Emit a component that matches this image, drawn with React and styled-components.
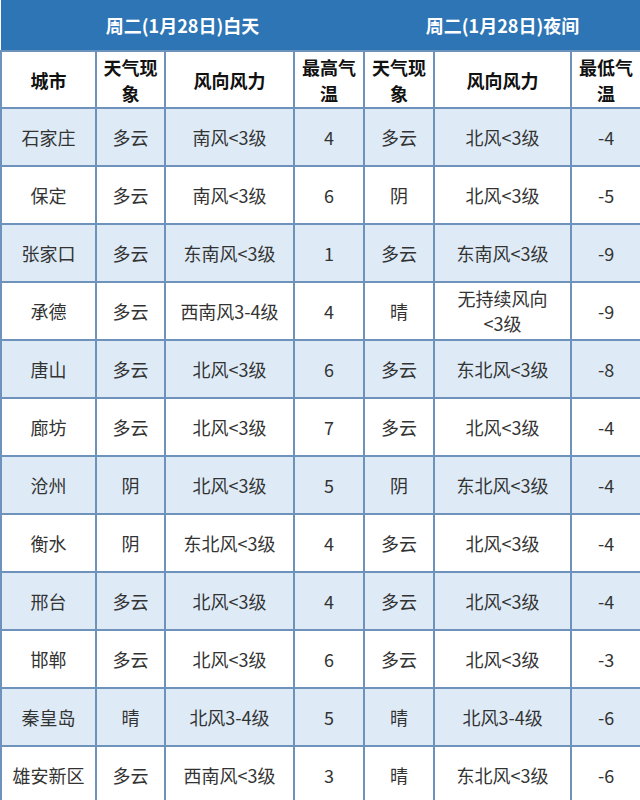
import React from "react";
import styled, { createGlobalStyle } from "styled-components";

const GlobalStyle = createGlobalStyle`
  body {
    margin: 0;
    background: #ffffff;
    font-family: "Noto Sans CJK SC", "Noto Sans", sans-serif;
  }
`;

const Table = styled.table`
  width: 640px;
  border-collapse: collapse;
  table-layout: fixed;
`;

const TitleCell = styled.th`
  height: 50px;
  padding: 0;
  background: #2e75b6;
  color: #ffffff;
  font-size: 18px;
  font-weight: 700;
  text-align: center;
  vertical-align: middle;
  border: none;
`;

const HeadCell = styled.th`
  height: 55px;
  padding: 0 1px;
  background: #ffffff;
  color: #111111;
  font-size: 18px;
  font-weight: 700;
  line-height: 26px;
  text-align: center;
  border: 2px solid #6d93bd;
`;

const Row = styled.tr`
  background: ${(p) => (p.$shaded ? "#deebf7" : "#ffffff")};
`;

const Cell = styled.td`
  height: 56px;
  padding: 0 1px;
  color: #333333;
  font-size: 18px;
  line-height: 25px;
  text-align: center;
  white-space: pre-line;
  border: 2px solid #6d93bd;
`;

const widths = [95, 69, 129, 70, 70, 137, 70];
const heads = ["城市", "天气现象", "风向风力", "最高气温", "天气现象", "风向风力", "最低气温"];

const rows = [
  ["石家庄", "多云", "南风<3级", "4", "多云", "北风<3级", "-4"],
  ["保定", "多云", "南风<3级", "6", "阴", "北风<3级", "-5"],
  ["张家口", "多云", "东南风<3级", "1", "多云", "东南风<3级", "-9"],
  ["承德", "多云", "西南风3-4级", "4", "晴", "无持续风向\n<3级", "-9"],
  ["唐山", "多云", "北风<3级", "6", "多云", "东北风<3级", "-8"],
  ["廊坊", "多云", "北风<3级", "7", "多云", "北风<3级", "-4"],
  ["沧州", "阴", "北风<3级", "5", "阴", "东北风<3级", "-4"],
  ["衡水", "阴", "东北风<3级", "4", "多云", "北风<3级", "-4"],
  ["邢台", "多云", "北风<3级", "4", "多云", "北风<3级", "-4"],
  ["邯郸", "多云", "北风<3级", "6", "多云", "北风<3级", "-3"],
  ["秦皇岛", "晴", "北风3-4级", "5", "晴", "北风3-4级", "-6"],
  ["雄安新区", "多云", "西南风<3级", "3", "晴", "东北风<3级", "-6"],
];

const App = () => {
  return (
    <>
      <GlobalStyle />
      <Table>
        <colgroup>
          {widths.map((w, i) => (
            <col key={i} style={{ width: w }} />
          ))}
        </colgroup>
        <thead>
          <tr>
            <TitleCell colSpan={4}>周二(1月28日)白天</TitleCell>
            <TitleCell colSpan={3}>周二(1月28日)夜间</TitleCell>
          </tr>
          <tr>
            {heads.map((h, i) => (
              <HeadCell key={i}>{h}</HeadCell>
            ))}
          </tr>
        </thead>
        <tbody>
          {rows.map((r, i) => (
            <Row key={i} $shaded={i % 2 === 0}>
              {r.map((c, j) => (
                <Cell key={j}>{c}</Cell>
              ))}
            </Row>
          ))}
        </tbody>
      </Table>
    </>
  );
};

export default App;
